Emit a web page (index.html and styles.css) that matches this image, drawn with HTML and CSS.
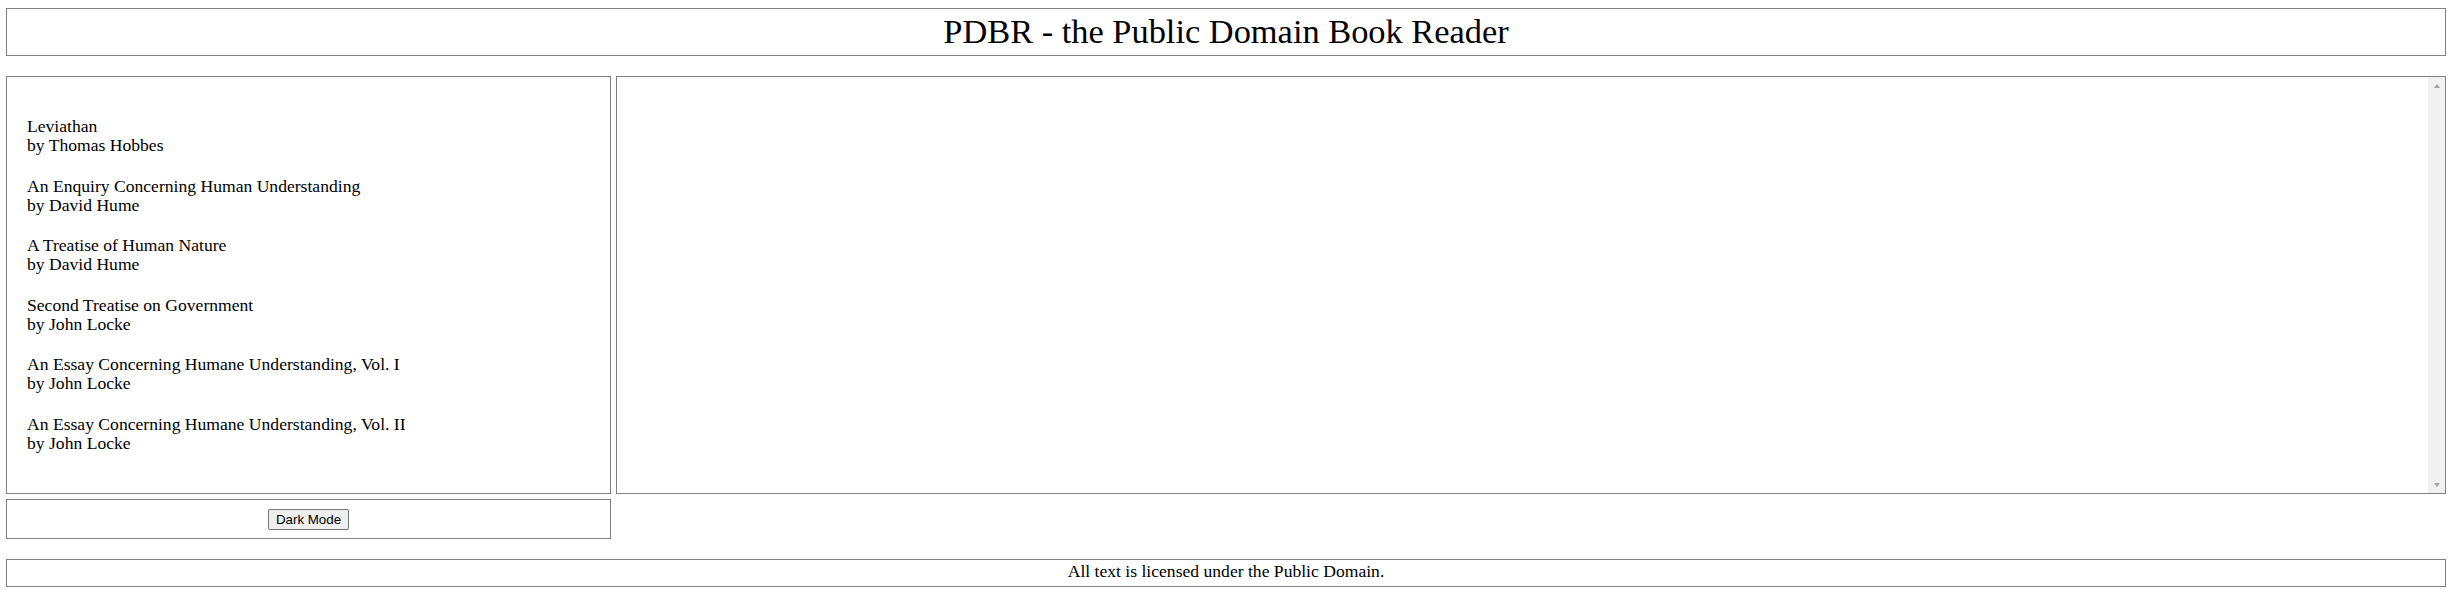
FILE: index.html
```html
<!DOCTYPE html>
<html lang="en">
<head>
<meta charset="utf-8">
<title>PDBR - the Public Domain Book Reader</title>
<link rel="stylesheet" href="styles.css">
</head>
<body>
<div class="page">
  <header class="masthead">
    <h1 class="title">PDBR - the Public Domain Book Reader</h1>
  </header>
  <main class="layout">
    <nav class="library">
      <ul class="book-list">
        <li class="book"><span>Leviathan</span><span>by Thomas Hobbes</span></li>
        <li class="book"><span>An Enquiry Concerning Human Understanding</span><span>by David Hume</span></li>
        <li class="book"><span>A Treatise of Human Nature</span><span>by David Hume</span></li>
        <li class="book"><span>Second Treatise on Government</span><span>by John Locke</span></li>
        <li class="book"><span>An Essay Concerning Humane Understanding, Vol. I</span><span>by John Locke</span></li>
        <li class="book"><span>An Essay Concerning Humane Understanding, Vol. II</span><span>by John Locke</span></li>
      </ul>
    </nav>
    <section class="reader">
      <div class="reader-text"></div>
      <div class="scrollbar">
        <div class="scroll-btn"><span class="arrow arrow-up"></span></div>
        <div class="scroll-btn"><span class="arrow arrow-down"></span></div>
      </div>
    </section>
    <div class="controls">
      <button class="mode-toggle" type="button">Dark Mode</button>
    </div>
  </main>
  <footer class="footer">All text is licensed under the Public Domain.</footer>
</div>
</body>
</html>
```

FILE: styles.css
```css
html, body {
  margin: 0;
  background: #fff;
}

body {
  font-family: "Liberation Serif", "Times New Roman", serif;
  font-size: 17.6px;
  color: #000;
}

.page {
  padding: 8px 8px 0 6px;
  display: flex;
  flex-direction: column;
  gap: 20px;
}

.masthead {
  border: 1px solid #808080;
  height: 48px;
  box-sizing: border-box;
  text-align: center;
}

.title {
  margin: 0;
  font-size: 34.4px;
  font-weight: normal;
  line-height: 38px;
  padding-top: 3px;
}

.layout {
  display: grid;
  grid-template-columns: 605px 1fr;
  grid-template-rows: 418px 40px;
  gap: 5px;
}

.library {
  border: 1px solid #808080;
  box-sizing: border-box;
  padding: 40px 20px;
}

.book-list {
  list-style: none;
  margin: 0;
  padding: 0;
  display: flex;
  flex-direction: column;
  gap: 21.5px;
}

.book {
  display: flex;
  flex-direction: column;
  line-height: 19px;
}

.reader {
  grid-column: 2;
  grid-row: 1;
  border: 1px solid #808080;
  box-sizing: border-box;
  display: flex;
}

.reader-text {
  flex: 1;
}

.scrollbar {
  width: 17px;
  background: #f1f1f1;
  display: flex;
  flex-direction: column;
  justify-content: space-between;
}

.scroll-btn {
  height: 17px;
  display: flex;
  align-items: center;
  justify-content: center;
}

.arrow {
  width: 0;
  height: 0;
  border-left: 3.5px solid transparent;
  border-right: 3.5px solid transparent;
}

.arrow-up {
  border-bottom: 4px solid #a3a3a3;
}

.arrow-down {
  border-top: 4px solid #a3a3a3;
}

.controls {
  grid-column: 1;
  grid-row: 2;
  border: 1px solid #808080;
  box-sizing: border-box;
  display: flex;
  align-items: center;
  justify-content: center;
}

.mode-toggle {
  font-family: "Liberation Sans", Arial, sans-serif;
  font-size: 13.333px;
  line-height: 15px;
  color: #000;
  background: #efefef;
  border: 1px solid #767676;
  border-radius: 2px;
  padding: 2px 7px;
  margin: 0;
}

.footer {
  border: 1px solid #808080;
  box-sizing: border-box;
  height: 28px;
  text-align: center;
  line-height: 19px;
  padding: 2px 0 5px;
}
```
